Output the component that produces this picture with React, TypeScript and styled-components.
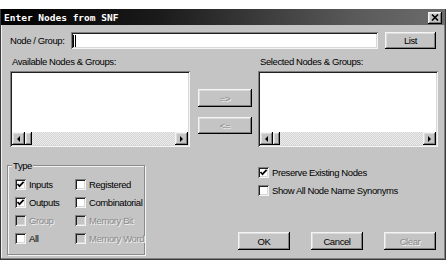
import React from "react";
import styled, { createGlobalStyle, css } from "styled-components";

const GlobalStyle = createGlobalStyle`
  html, body {
    margin: 0;
    padding: 0;
    background: #ffffff;
  }
  * {
    box-sizing: border-box;
  }
`;

const uiFont = `"Liberation Sans", Arial, sans-serif`;
const face = "#c4c4c4";

const raised = css`
  background: ${face};
  box-shadow: inset -1px -1px 0 #000, inset 1px 1px 0 #f4f4f4,
    inset -2px -2px 0 #808080, inset 2px 2px 0 #dcdcdc;
`;

const sunken = css`
  box-shadow: inset 1px 1px 0 #808080, inset -1px -1px 0 #f4f4f4,
    inset 2px 2px 0 #202020, inset -2px -2px 0 #d8d8d8;
`;

const Page = styled.div`
  padding-top: 9px;
  font-family: ${uiFont};
  font-size: 9.5px;
  letter-spacing: -0.4px;
  color: #000;
`;

const Window = styled.div`
  width: 446px;
  height: 251px;
  background: ${face};
  border: 1px solid #3a3a3a;
  border-top: none;
  padding: 0 1px 1px 1px;
  box-shadow: inset -1px -1px 0 #808080, inset 1px 0 0 #f0f0f0;
  display: flex;
  flex-direction: column;
`;

const TitleBar = styled.div`
  height: 16px;
  margin: 0 -1px;
  background: linear-gradient(90deg, #000 0%, #1a1a1a 35%, #5a5a5a 80%, #6c6c6c 100%);
  display: flex;
  align-items: center;
  justify-content: space-between;
  padding: 0 3px 0 3px;
`;

const Title = styled.span`
  font-family: "DejaVu Sans Mono", "Liberation Mono", monospace;
  font-weight: bold;
  font-size: 9.5px;
  letter-spacing: 0;
  color: #fff;
`;

const CloseBox = styled.div`
  ${raised};
  width: 14px;
  height: 12px;
  display: flex;
  align-items: center;
  justify-content: center;
  margin-top: 1px;
`;

const Body = styled.div`
  padding: 7px 8px 0 8px;
  display: flex;
  flex-direction: column;
`;

const TopRow = styled.div`
  display: flex;
  align-items: center;
`;

const FieldLabel = styled.span`
  width: 61px;
  flex: none;
  white-space: nowrap;
`;

const TextField = styled.div`
  ${sunken};
  background: #fff;
  width: 307px;
  flex: none;
  height: 17px;
  display: flex;
  align-items: center;
  padding-left: 2px;
`;

const Caret = styled.span`
  width: 3px;
  height: 12px;
  background: #000;
  border-left: 1px solid #000;
  box-shadow: inset 1px 0 0 #fff;
`;

const Button = styled.div<{ $w: number; $h?: number; $off?: boolean }>`
  ${raised};
  width: ${(p) => p.$w}px;
  height: ${(p) => p.$h ?? 18}px;
  flex: none;
  display: flex;
  align-items: center;
  justify-content: center;
  white-space: nowrap;
  color: ${(p) => (p.$off ? "#8a8a8a" : "#000")};
  text-shadow: ${(p) => (p.$off ? "1px 1px 0 #f4f4f4" : "none")};
`;

const ListArea = styled.div`
  display: grid;
  grid-template-columns: 180px 54px 178px;
  column-gap: 8px;
  margin-top: 6px;
  & > :nth-child(3) {
    margin-left: -2px;
  }
`;

const ListColumn = styled.div`
  display: flex;
  flex-direction: column;
`;

const ListLabel = styled.div`
  height: 13px;
  line-height: 13px;
  padding-left: 2px;
  margin-bottom: 3px;
  white-space: nowrap;
`;

const ListBox = styled.div`
  ${sunken};
  background: #fff;
  height: 76px;
  padding: 2px;
  display: flex;
  flex-direction: column;
  justify-content: flex-end;
`;

const ScrollBar = styled.div`
  height: 13px;
  display: flex;
`;

const ScrollBtn = styled.div<{ $w?: number }>`
  ${raised};
  width: ${(p) => p.$w ?? 13}px;
  height: 13px;
  display: flex;
  align-items: center;
  justify-content: center;
`;

const Track = styled.div`
  flex: 1;
  background-color: #e4e4e4;
  background-image: repeating-conic-gradient(#d4d4d4 0 25%, #ececec 0 50%);
  background-size: 2px 2px;
`;

const Arrow = styled.span<{ $dir: "l" | "r" }>`
  width: 0;
  height: 0;
  border-top: 3px solid transparent;
  border-bottom: 3px solid transparent;
  ${(p) =>
    p.$dir === "l"
      ? "border-right: 3px solid #000;"
      : "border-left: 3px solid #000;"}
`;

const MoveColumn = styled.div`
  display: flex;
  flex-direction: column;
  gap: 10px;
  padding-top: 34px;
`;

const BottomArea = styled.div`
  display: flex;
  align-items: flex-start;
`;

const GroupBox = styled.div`
  margin: 18px 0 0 -3px;
  width: 138px;
  height: 90px;
  border: 1px solid #8a8a8a;
  box-shadow: 1px 1px 0 #f4f4f4, inset 1px 1px 0 #f4f4f4;
  padding: 0 0 0 7px;
`;

const Legend = styled.div`
  display: inline-block;
  background: ${face};
  margin: -7px 0 0 -3px;
  padding: 0 1px 0 1px;
  height: 13px;
  line-height: 13px;
  vertical-align: top;
`;

const CheckGrid = styled.div`
  display: grid;
  grid-template-columns: 60px auto;
  grid-auto-rows: 18px;
  margin-top: -2px;
`;

const CheckRow = styled.div<{ $off?: boolean }>`
  display: flex;
  align-items: center;
  gap: 3px;
  white-space: nowrap;
  color: ${(p) => (p.$off ? "#8a8a8a" : "#000")};
  text-shadow: ${(p) => (p.$off ? "1px 1px 0 #f4f4f4" : "none")};
`;

const Box = styled.span<{ $off?: boolean }>`
  width: 11px;
  height: 11px;
  flex: none;
  background: ${(p) => (p.$off ? face : "#fff")};
  box-shadow: inset 1px 1px 0 #808080, inset -1px -1px 0 #f4f4f4,
    inset 2px 2px 0 #202020, inset -2px -2px 0 #d8d8d8;
  display: flex;
  align-items: center;
  justify-content: center;
`;

const RightSide = styled.div`
  margin-left: 93px;
  width: 198px;
  display: flex;
  flex-direction: column;
  padding-top: 16px;
`;

const Options = styled.div`
  padding-left: 20px;
  display: grid;
  grid-auto-rows: 18px;
`;

const ButtonRow = styled.div`
  display: flex;
  gap: 21px;
  margin-top: 33px;
`;

function Check({ label, on, off }: { label: string; on?: boolean; off?: boolean }) {
  return (
    <CheckRow $off={off}>
      <Box $off={off}>
        {on && (
          <svg width="9" height="9" viewBox="0 0 9 9">
            <path d="M1.5 4 L3.5 6.2 L7.6 1.8" fill="none" stroke="#000" strokeWidth="1.7" />
          </svg>
        )}
      </Box>
      <span>{label}</span>
    </CheckRow>
  );
}

function Scroller() {
  return (
    <ScrollBar>
      <ScrollBtn>
        <Arrow $dir="l" />
      </ScrollBtn>
      <ScrollBtn $w={7} />
      <Track />
      <ScrollBtn>
        <Arrow $dir="r" />
      </ScrollBtn>
    </ScrollBar>
  );
}

export default function App() {
  return (
    <Page>
      <GlobalStyle />
      <Window>
        <TitleBar>
          <Title>Enter Nodes from SNF</Title>
          <CloseBox>
            <svg width="8" height="7" viewBox="0 0 8 7">
              <path d="M1 0.5 L7 6.5 M7 0.5 L1 6.5" stroke="#000" strokeWidth="1.6" />
            </svg>
          </CloseBox>
        </TitleBar>
        <Body>
          <TopRow>
            <FieldLabel>Node / Group:</FieldLabel>
            <TextField>
              <Caret />
            </TextField>
            <Button $w={51} $h={17} style={{ marginLeft: 7 }}>
              List
            </Button>
          </TopRow>
          <ListArea>
            <ListColumn>
              <ListLabel>Available Nodes &amp; Groups:</ListLabel>
              <ListBox>
                <Scroller />
              </ListBox>
            </ListColumn>
            <MoveColumn>
              <Button $w={54} $off>
                =&gt;
              </Button>
              <Button $w={54} $h={17} $off>
                &lt;=
              </Button>
            </MoveColumn>
            <ListColumn>
              <ListLabel>Selected Nodes &amp; Groups:</ListLabel>
              <ListBox>
                <Scroller />
              </ListBox>
            </ListColumn>
          </ListArea>
          <BottomArea>
            <GroupBox>
              <Legend>Type</Legend>
              <CheckGrid>
                <Check label="Inputs" on />
                <Check label="Registered" />
                <Check label="Outputs" on />
                <Check label="Combinatorial" />
                <Check label="Group" off />
                <Check label="Memory Bit" off />
                <Check label="All" />
                <Check label="Memory Word" off />
              </CheckGrid>
            </GroupBox>
            <RightSide>
              <Options>
                <Check label="Preserve Existing Nodes" on />
                <Check label="Show All Node Name Synonyms" />
              </Options>
              <ButtonRow>
                <Button $w={52}>OK</Button>
                <Button $w={52}>Cancel</Button>
                <Button $w={52} $off>
                  Clear
                </Button>
              </ButtonRow>
            </RightSide>
          </BottomArea>
        </Body>
      </Window>
    </Page>
  );
}
